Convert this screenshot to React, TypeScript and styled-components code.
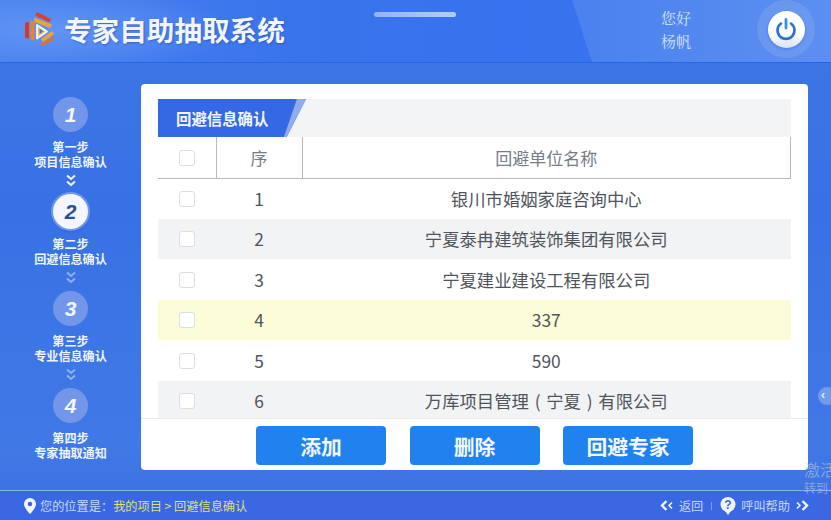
import React from "react";
import styled, { createGlobalStyle } from "styled-components";

const Global = createGlobalStyle`
  html, body { margin: 0; padding: 0; width: 831px; height: 520px; overflow: hidden; }
  body { font-family: "Noto Sans CJK SC", "Liberation Sans", sans-serif; }
  * { box-sizing: border-box; }
`;

const Page = styled.div`
  position: relative;
  width: 831px;
  height: 520px;
  overflow: hidden;
  display: flex;
  flex-direction: column;
  background: linear-gradient(180deg, #3e78e6 0%, #3871e4 40%, #4079e6 85%, #3d6fe2 100%);
`;

const Header = styled.header`
  position: relative;
  height: 63px;
  flex: none;
  display: flex;
  align-items: flex-start;
  padding: 12px 0 0 24px;
  border-bottom: 1px solid #2467e8;
  background:
    radial-gradient(ellipse 180px 40px at 60px 30px, rgba(120,165,250,.55), transparent),
    linear-gradient(90deg, #4a82ee 0%, #3a74ec 35%, #3872ee 60%, #3a75ee 100%);
  &::before {
    content: "";
    position: absolute;
    top: 0;
    right: 0;
    bottom: 0;
    width: 259px;
    background: linear-gradient(90deg, #4a81ee, #5c8ff0);
    clip-path: polygon(0 0, 100% 0, 100% 100%, 20px 100%);
  }
`;

const TopNotch = styled.div`
  position: absolute;
  top: 12px;
  left: 374px;
  width: 82px;
  height: 5px;
  border-radius: 3px;
  background: linear-gradient(90deg, #8fb4f6, #b4ccf8);
`;

const Brand = styled.div`
  position: relative;
  display: flex;
  align-items: center;
  gap: 9px;
`;

const Title = styled.h1`
  margin: 0;
  font-size: 27.6px;
  line-height: 33px;
  font-weight: 700;
  color: #f0f5fe;
  text-shadow: 1px 1px 2px rgba(30, 60, 140, .45);
  white-space: nowrap;
`;

const UserBlock = styled.div`
  position: absolute;
  left: 661px;
  top: 7px;
  display: flex;
  flex-direction: column;
  gap: 2px;
  font-family: "Noto Serif CJK SC", "Noto Sans CJK SC", sans-serif;
  font-size: 15px;
  line-height: 21px;
  color: #d5e2fb;
`;

const PowerHalo = styled.div`
  position: absolute;
  left: 757px;
  top: 0;
  width: 58px;
  height: 58px;
  border-radius: 50%;
  background: rgba(255, 255, 255, .1);
  display: flex;
  align-items: center;
  justify-content: center;
`;

const PowerButton = styled.div`
  width: 37px;
  height: 37px;
  border-radius: 50%;
  background: linear-gradient(180deg, #fff 60%, #d7e2f6 100%);
  box-shadow: 0 1px 3px rgba(30, 70, 150, .35);
  display: flex;
  align-items: center;
  justify-content: center;
`;

const Body = styled.main`
  flex: 1;
  display: flex;
  min-height: 0;
  padding-top: 21px;
  align-items: flex-start;
`;

const Sidebar = styled.nav`
  width: 141px;
  flex: none;
  display: flex;
  flex-direction: column;
  align-items: center;
  padding-top: 13px;
`;

const Step = styled.div`
  width: 141px;
  height: 97px;
  display: flex;
  flex-direction: column;
  align-items: center;
`;

const Circle = styled.div<{ $active?: boolean }>`
  width: 35px;
  height: 35px;
  flex: none;
  border-radius: 50%;
  display: flex;
  align-items: center;
  justify-content: center;
  font-family: "Liberation Sans", sans-serif;
  font-style: italic;
  font-weight: 700;
  font-size: 21px;
  color: ${p => (p.$active ? "#2b4f9e" : "#f2f6fe")};
  background: ${p => (p.$active ? "#f3f6fd" : "#7196ea")};
  box-shadow: ${p => (p.$active ? "0 0 0 2px #6f98ec, 0 2px 3px rgba(20,50,120,.4)" : "none")};
`;

const StepLabel = styled.div`
  margin-top: 8px;
  font-size: 12.1px;
  line-height: 14.5px;
  font-weight: 700;
  color: #eef3fe;
  text-align: center;
  white-space: nowrap;
`;

const Arrows = styled.div`
  margin-top: 5px;
  line-height: 0;
`;

const Card = styled.section`
  width: 667px;
  height: 386px;
  flex: none;
  background: #fff;
  border-radius: 4px;
  display: flex;
  flex-direction: column;
  overflow: hidden;
`;

const CardMain = styled.div`
  height: 335px;
  flex: none;
  padding: 15px 17px 0;
  border-bottom: 1px solid #e9ebef;
  overflow: hidden;
`;

const TabBar = styled.div`
  height: 38px;
  background: #f2f4f6;
  display: flex;
`;

const Tab = styled.div`
  position: relative;
  width: 148px;
  height: 38px;
  padding-left: 18px;
  display: flex;
  align-items: center;
  font-size: 15.4px;
  font-weight: 700;
  color: #f2f6fe;
  background: #3568e4;
  clip-path: polygon(0 0, 100% 0, 87% 100%, 0 100%);
  &::after {
    content: "";
    position: absolute;
    top: 0;
    bottom: 0;
    right: 0;
    width: 24px;
    background: #8facf0;
    clip-path: polygon(62% 0, 100% 0, 44% 100%, 8% 100%);
  }
`;

const Table = styled.table`
  width: 633px;
  border-collapse: collapse;
  table-layout: fixed;
`;

const HeadCell = styled.th`
  height: 41px;
  padding: 0;
  font-size: 17px;
  font-weight: 400;
  color: #777d86;
  text-align: center;
  border-bottom: 1px solid #b5b8bc;
  border-left: 1px solid #b5b8bc;
  &:first-child { border-left: none; }
  &:last-child { border-right: 1px solid #b5b8bc; }
`;

const Row = styled.tr<{ $tone: "white" | "grey" | "yellow" }>`
  background: ${p => ({ white: "#fff", grey: "#f1f3f5", yellow: "#fcfcd8" }[p.$tone])};
`;

const Cell = styled.td`
  height: 40.5px;
  padding: 0;
  font-size: 17.35px;
  color: #50555c;
  text-align: center;
  white-space: nowrap;
`;

const Paren = styled.span`
  display: inline-block;
  width: 1em;
  text-align: center;
`;

const Check = styled.span`
  display: inline-block;
  vertical-align: middle;
  width: 16px;
  height: 16px;
  margin-bottom: 4px;
  border: 1px solid #dcdde6;
  border-radius: 3px;
  background: #fff;
`;

const CardActions = styled.div`
  flex: 1;
  display: flex;
  padding: 7px 0 0 115px;
  gap: 23.5px;
`;

const ActionButton = styled.button`
  width: 130px;
  height: 39px;
  border: none;
  border-radius: 4px;
  background: #1f82ee;
  color: #f2f7fe;
  font-family: inherit;
  font-size: 20.8px;
  font-weight: 700;
  padding: 0;
`;

const Footer = styled.footer`
  position: relative;
  height: 30px;
  flex: none;
  border-top: 1px solid #8eb0f2;
  background: #3a67e2;
  display: flex;
  align-items: center;
  padding: 0 22px 0 24px;
  font-size: 12.2px;
  color: #c6d6f8;
`;

const Location = styled.div`
  display: flex;
  align-items: center;
  gap: 4px;
`;

const Crumb = styled.span`
  color: #dfdf7c;
`;

const FooterNav = styled.div`
  margin-left: auto;
  display: flex;
  align-items: center;
  gap: 5px;
`;

const Divider = styled.span`
  width: 1px;
  height: 8px;
  margin: 0 3px;
  background: #7f9fe8;
`;

const SideHandle = styled.div`
  position: absolute;
  left: 818px;
  top: 387px;
  width: 18px;
  height: 18px;
  border-radius: 50%;
  background: #6f9bee;
  color: #eaf1fe;
  font: 700 12px/17px "Liberation Sans", sans-serif;
  padding-left: 3px;
`;

const Watermark = styled.div`
  position: absolute;
  left: 804px;
  top: 459px;
  color: rgba(200, 205, 215, .55);
  font-size: 16px;
  line-height: 20px;
  white-space: nowrap;
`;

const WatermarkSmall = styled.div`
  font-size: 12px;
  line-height: 18px;
`;

const Logo = () => (
  <svg width="31" height="34" viewBox="0 0 31 34">
    <path d="M13 0l14 7-1.5 3.2L11 3.5z" fill="#d9412d" />
    <path d="M10 5.5l18 7-1.8 3.6L10.5 10z" fill="#f0a232" />
    <path d="M1 11l4-1.5V27l-4-1.5z" fill="#d23a2b" />
    <path d="M6.5 8.5l4 1.5v19l-4-1.5z" fill="#e9822e" />
    <path d="M13 13l10 6.5-10 7z" fill="#f6c64a" stroke="#f5f7fc" strokeWidth="1.8" strokeLinejoin="round" />
    <path d="M15.5 16.5l4 3-4 2.8z" fill="#3f78e6" />
    <path d="M28 19l2 3.2L19 30l-2-3z" fill="#f0a232" />
    <path d="M30 24.5v3L18 34l-1.5-2.5z" fill="#e5702b" />
  </svg>
);

const Power = () => (
  <svg width="24" height="24" viewBox="0 0 24 24" fill="none" strokeLinecap="round">
    <path d="M7 6.5a8.5 8.5 0 1 0 10 0" stroke="#2a72d8" strokeWidth="2.6" />
    <path d="M12 2.5v8.5" stroke="#2f94e8" strokeWidth="2.8" />
  </svg>
);

const Chevrons = ({ faded }: { faded?: boolean }) => (
  <svg width="10" height="14" viewBox="0 0 10 14" fill="none" stroke={faded ? "#8fb0f2" : "#f0f5fe"} strokeWidth="2">
    <path d="M1 1.5l4 3.5 4-3.5" />
    <path d="M1 7.5l4 3.5 4-3.5" />
  </svg>
);

const Pin = () => (
  <svg width="12" height="16" viewBox="0 0 12 16">
    <path d="M6 0a6 6 0 0 1 6 6c0 4-6 10-6 10S0 10 0 6a6 6 0 0 1 6-6z" fill="#f2f6fe" />
    <circle cx="6" cy="6" r="2.3" fill="#3a67e2" />
  </svg>
);

const Help = () => (
  <svg width="16" height="18" viewBox="0 0 16 18">
    <circle cx="8" cy="7.5" r="7.5" fill="#f2f6fe" />
    <path d="M5 14l3 4 3-4z" fill="#f2f6fe" />
    <text x="8" y="12" textAnchor="middle" fontSize="12" fontWeight="700" fontFamily="Liberation Sans" fill="#3a67e2">?</text>
  </svg>
);

const DoubleArrow = ({ left }: { left?: boolean }) => (
  <svg width="14" height="11" viewBox="0 0 14 11" fill="none" stroke="#f2f6fe">
    {left ? (
      <>
        <path d="M6.5 1L2 5.5l4.5 4.5" strokeWidth="2.4" />
        <path d="M12 2.5L9 5.5l3 3" strokeWidth="1.6" />
      </>
    ) : (
      <>
        <path d="M2 2.5l3 3-3 3" strokeWidth="1.6" />
        <path d="M7.5 1L12 5.5 7.5 10" strokeWidth="2.4" />
      </>
    )}
  </svg>
);

const steps = [
  { n: 1, a: "第一步", b: "项目信息确认" },
  { n: 2, a: "第二步", b: "回避信息确认", active: true },
  { n: 3, a: "第三步", b: "专业信息确认" },
  { n: 4, a: "第四步", b: "专家抽取通知" },
];

const rows: { no: number; name: React.ReactNode; tone: "white" | "grey" | "yellow" }[] = [
  { no: 1, name: "银川市婚姻家庭咨询中心", tone: "white" },
  { no: 2, name: "宁夏泰冉建筑装饰集团有限公司", tone: "grey" },
  { no: 3, name: "宁夏建业建设工程有限公司", tone: "white" },
  { no: 4, name: "337", tone: "yellow" },
  { no: 5, name: "590", tone: "white" },
  {
    no: 6,
    name: (
      <>
        万库项目管理<Paren>(</Paren>宁夏<Paren>)</Paren>有限公司
      </>
    ),
    tone: "grey",
  },
];

export default function App() {
  return (
    <Page>
      <Global />
      <Header>
        <TopNotch />
        <Brand>
          <Logo />
          <Title>专家自助抽取系统</Title>
        </Brand>
        <UserBlock>
          <span>您好</span>
          <span>杨帆</span>
        </UserBlock>
        <PowerHalo>
          <PowerButton>
            <Power />
          </PowerButton>
        </PowerHalo>
      </Header>
      <Body>
        <Sidebar>
          {steps.map((s, i) => (
            <Step key={s.n}>
              <Circle $active={s.active}>{s.n}</Circle>
              <StepLabel>
                {s.a}
                <br />
                {s.b}
              </StepLabel>
              {i < 3 && (
                <Arrows>
                  <Chevrons faded={i > 0} />
                </Arrows>
              )}
            </Step>
          ))}
        </Sidebar>
        <Card>
          <CardMain>
            <TabBar>
              <Tab>回避信息确认</Tab>
            </TabBar>
            <Table>
              <colgroup>
                <col width="58" />
                <col width="86" />
                <col />
              </colgroup>
              <thead>
                <tr>
                  <HeadCell><Check /></HeadCell>
                  <HeadCell>序</HeadCell>
                  <HeadCell>回避单位名称</HeadCell>
                </tr>
              </thead>
              <tbody>
                {rows.map(r => (
                  <Row key={r.no} $tone={r.tone}>
                    <Cell><Check /></Cell>
                    <Cell>{r.no}</Cell>
                    <Cell>{r.name}</Cell>
                  </Row>
                ))}
              </tbody>
            </Table>
          </CardMain>
          <CardActions>
            <ActionButton>添加</ActionButton>
            <ActionButton>删除</ActionButton>
            <ActionButton>回避专家</ActionButton>
          </CardActions>
        </Card>
      </Body>
      <Footer>
        <Location>
          <Pin />
          <span>您的位置是：<Crumb>我的项目 &gt; 回避信息确认</Crumb></span>
        </Location>
        <FooterNav>
          <DoubleArrow left />
          <span>返回</span>
          <Divider />
          <Help />
          <span>呼叫帮助</span>
          <DoubleArrow />
        </FooterNav>
      </Footer>
      <SideHandle>‹</SideHandle>
      <Watermark>
        激活
        <WatermarkSmall>转到</WatermarkSmall>
      </Watermark>
    </Page>
  );
}
